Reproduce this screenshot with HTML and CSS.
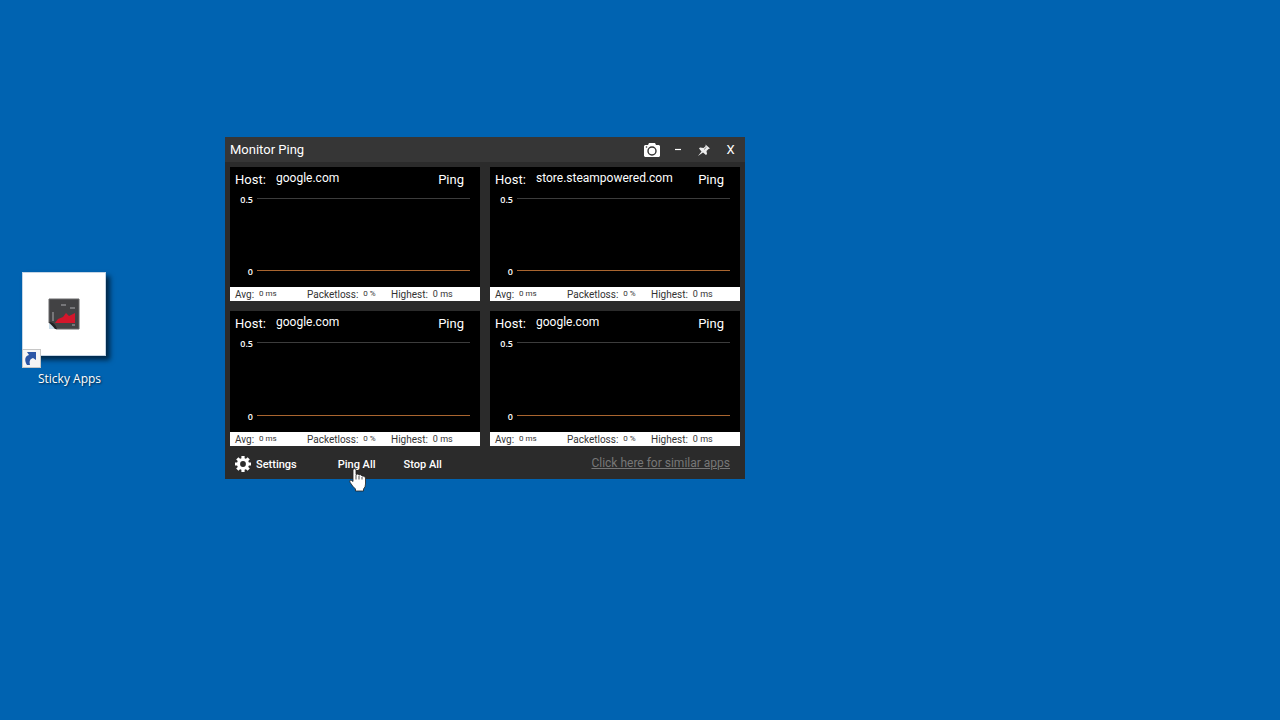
FILE: index.html
```html
<!DOCTYPE html>
<html lang="en">
<head>
    <meta charset="utf-8">
    <title>Monitor Ping</title>
    <link rel="stylesheet" href="styles.css">
</head>
<body>
    <a class="shortcut" href="#">
        <span class="shortcut-tile">
            <svg class="shortcut-app" viewBox="0 0 32 32">
                <path d="M1 1H31V31H8L1 25Z" fill="#424244"/>
                <path d="M1 1H31V31H8L1 25Z" fill="none" stroke="#68686a"/>
                <path d="M1 25L8 31H1Z" fill="#c8dce9"/>
                <path d="M1 24Q7 24 9 31L7 31Z" fill="#202224"/>
                <path d="M7 25L10 21L15 19L18 15L21 18L27 15V25Z" fill="#d3162b"/>
                <path d="M5 14V23M13 7H18M22 10H27M24 27H27" stroke="#88888b" stroke-width="1.500"/>
            </svg>
            <svg class="shortcut-arrow" viewBox="0 0 19 19">
                <rect x=".5" y=".5" width="18" height="18" fill="#f5f5f5" stroke="#c6c6c6"/>
                <path d="M5 16C2 11 3 7 7 6L5 3L14 3L14 11L11 9C8 10 7 12 8 16Z" fill="#2b55a5"/>
            </svg>
        </span>
        <span class="shortcut-name">Sticky Apps</span>
    </a>

    <div class="window">
        <div class="title-bar">
            <h1>Monitor Ping</h1>
            <button class="title-button" aria-label="Screenshot">
                <svg width="16" height="14" viewBox="0 0 16 14">
                    <path d="M1 2H4L5 0H11L12 2H15L16 3V13L15 14H1L0 13V3Z" fill="#fff"/>
                    <circle cx="8" cy="8" r="4" fill="none" stroke="#333" stroke-width="1.4"/>
                    <circle cx="2.5" cy="4" r=".8" fill="#333"/>
                </svg>
            </button>
            <button class="title-button" aria-label="Minimize">
                <svg width="16" height="14" viewBox="0 0 16 14"><path d="M5 6.500H11" stroke="#fff" stroke-width="1.2"/></svg>
            </button>
            <button class="title-button" aria-label="Pin">
                <svg width="14" height="14" viewBox="0 0 14 14">
                    <path d="M8.500 1.500L13 5.500L11.500 6L9.500 8L10 11L9 12L6 9.500L1 13L4.500 8.500L2 5.500L3 4.500L6.500 5L8.700 3Z" fill="#eee"/>
                    <path d="M7 6.500L9.500 4.200" stroke="#333" stroke-width=".6"/>
                </svg>
            </button>
            <button class="title-button" aria-label="Close">X</button>
        </div>

        <div class="monitors">
            <div class="monitor">
                <div class="monitor-head">
                    <label for="host1">Host:</label>
                    <input type="text" id="host1" value="google.com">
                    <button>Ping</button>
                </div>
                <div class="chart">
                    <div class="tick"><span>0.5</span></div>
                    <div class="tick tick-zero"><span>0</span></div>
                </div>
                <div class="stats">
                    <div>Avg: <span>0 ms</span></div>
                    <div>Packetloss: <span>0 %</span></div>
                    <div>Highest: <span class="highest">0 ms</span></div>
                </div>
            </div>

            <div class="monitor">
                <div class="monitor-head">
                    <label for="host2">Host:</label>
                    <input type="text" id="host2" value="store.steampowered.com">
                    <button>Ping</button>
                </div>
                <div class="chart">
                    <div class="tick"><span>0.5</span></div>
                    <div class="tick tick-zero"><span>0</span></div>
                </div>
                <div class="stats">
                    <div>Avg: <span>0 ms</span></div>
                    <div>Packetloss: <span>0 %</span></div>
                    <div>Highest: <span class="highest">0 ms</span></div>
                </div>
            </div>

            <div class="monitor">
                <div class="monitor-head">
                    <label for="host3">Host:</label>
                    <input type="text" id="host3" value="google.com">
                    <button>Ping</button>
                </div>
                <div class="chart">
                    <div class="tick"><span>0.5</span></div>
                    <div class="tick tick-zero"><span>0</span></div>
                </div>
                <div class="stats">
                    <div>Avg: <span>0 ms</span></div>
                    <div>Packetloss: <span>0 %</span></div>
                    <div>Highest: <span class="highest">0 ms</span></div>
                </div>
            </div>

            <div class="monitor">
                <div class="monitor-head">
                    <label for="host4">Host:</label>
                    <input type="text" id="host4" value="google.com">
                    <button>Ping</button>
                </div>
                <div class="chart">
                    <div class="tick"><span>0.5</span></div>
                    <div class="tick tick-zero"><span>0</span></div>
                </div>
                <div class="stats">
                    <div>Avg: <span>0 ms</span></div>
                    <div>Packetloss: <span>0 %</span></div>
                    <div>Highest: <span class="highest">0 ms</span></div>
                </div>
            </div>
        </div>

        <div class="toolbar">
            <button class="settings">
                <svg width="16" height="16" viewBox="0 0 16 16">
                    <circle cx="8" cy="8" r="4.500" fill="none" stroke="#fff" stroke-width="3.200"/>
                    <path d="M8 0V3M8 13V16M0 8H3M13 8H16M2.300 2.300L4.400 4.400M11.600 11.600L13.700 13.700M2.300 13.700L4.400 11.600M11.600 4.400L13.700 2.300" stroke="#fff" stroke-width="3.200"/>
                </svg>
                Settings
            </button>
            <button class="ping-all">Ping All</button>
            <button class="stop-all">Stop All</button>
            <a href="#">Click here for similar apps</a>
        </div>
    </div>

    <svg class="pointer" width="18" height="24" viewBox="0 0 18 24">
        <path d="M4 2Q4 .7 5.500 .7T7 2V6.500Q9 5.500 10 7Q12 6 13 8Q16 7.500 16.500 10V16Q16.500 19 14.500 21V23H6.500V21Q4 19 .8 14Q.5 12 2 12L4 13.500Z" fill="#fff" stroke="#222" stroke-width=".8"/>
        <path d="M7 7V11.500M10 8V11.500M13 9V11.500" stroke="#222" stroke-width=".8"/>
    </svg>
</body>
</html>
```
FILE: styles.css
```css
body {
    margin: 0;
    min-height: 100vh;
    background-color: #0063B1;
    font-family: Roboto, sans-serif;
    color: #FFF;
    overflow: hidden;
}

button,
input {
    padding: 0;
    border: none;
    background: none;
    color: inherit;
    font: inherit;
}

button {
    cursor: pointer;
}

svg {
    display: block;
}

/* desktop icon */
.shortcut {
    position: absolute;
    left: 22px;
    top: 272px;
    width: 95px;
    color: #FFF;
    text-decoration: none;
}

.shortcut-tile {
    display: flex;
    position: relative;
    width: 84px;
    height: 84px;
    align-items: center;
    justify-content: center;
    background-color: #FFF;
    box-shadow: inset 0 0 0 1px #C5D5E5, 4px 4px 5px rgba(0, 0, 0, 0.6);
}

.shortcut-app {
    width: 32px;
    height: 32px;
}

.shortcut-arrow {
    position: absolute;
    left: 0;
    bottom: -12px;
    width: 19px;
    height: 19px;
}

.shortcut-name {
    display: block;
    margin-top: 15px;
    font-family: "Open Sans", sans-serif;
    font-size: 12px;
    line-height: 16px;
    text-align: center;
    text-shadow: 1px 1px 2px rgba(0, 0, 0, 0.6);
}

/* app window */
.window {
    position: absolute;
    left: 225px;
    top: 137px;
    width: 520px;
    background-color: #2B2B2B;
}

.title-bar {
    display: flex;
    align-items: center;
    height: 25px;
    padding: 0 1px 0 5px;
    background-color: #363636;
}

.title-bar h1 {
    flex: 1;
    margin: 0;
    font-size: 13px;
    font-weight: normal;
}

.title-button {
    display: flex;
    justify-content: center;
    width: 26px;
    font-size: 13px;
}

.title-button:last-child {
    width: 27px;
}

.monitors {
    display: grid;
    grid-template-columns: 1fr 1fr;
    grid-template-rows: 134px 135px;
    gap: 10px;
    padding: 5px 5px 0;
}

.monitor {
    display: flex;
    flex-direction: column;
    background-color: #000;
}

.monitor-head {
    display: flex;
    height: 24px;
    padding: 0 16px 0 5px;
    font-size: 13px;
    line-height: 25px;
}

.monitor-head label {
    width: 41px;
}

.monitor-head input {
    flex: 1;
    min-width: 0;
    height: 22px;
    font-size: 12px;
}

.chart {
    display: flex;
    flex: 1;
    flex-direction: column;
    justify-content: space-between;
    padding: 3px 10px 9px 0;
}

.tick {
    display: flex;
    align-items: center;
    gap: 4px;
    height: 12px;
    font: 600 9px/12px "Open Sans", sans-serif;
}

.tick span {
    width: 23px;
    text-align: right;
}

.tick::after {
    content: "";
    flex: 1;
    height: 1px;
    margin-bottom: 3px;
    background-color: #3C3C3C;
}

.tick-zero::after {
    background-color: #A9652F;
}

.stats {
    display: grid;
    grid-template-columns: 72px 84px 1fr;
    height: 14px;
    padding-left: 5px;
    background-color: #FFF;
    color: #333;
    font-size: 10px;
    line-height: 15px;
}

.stats div {
    display: flex;
    gap: 5px;
}

.stats span {
    font-size: 8px;
    line-height: 14px;
}

.stats .highest {
    font-size: 9px;
}

/* bottom bar */
.toolbar {
    display: flex;
    align-items: center;
    height: 33px;
    padding: 0 15px 0 10px;
    font-size: 11px;
    font-weight: 500;
}

.toolbar a {
    margin-left: auto;
    color: #777;
    font-size: 12px;
    font-weight: normal;
}

.settings {
    display: flex;
    align-items: center;
    gap: 5px;
    margin-top: 3px;
}

.ping-all {
    margin: 3px 28px 0 41px;
}

.stop-all {
    margin-top: 3px;
}

.pointer {
    position: absolute;
    left: 349px;
    top: 468px;
}
```
